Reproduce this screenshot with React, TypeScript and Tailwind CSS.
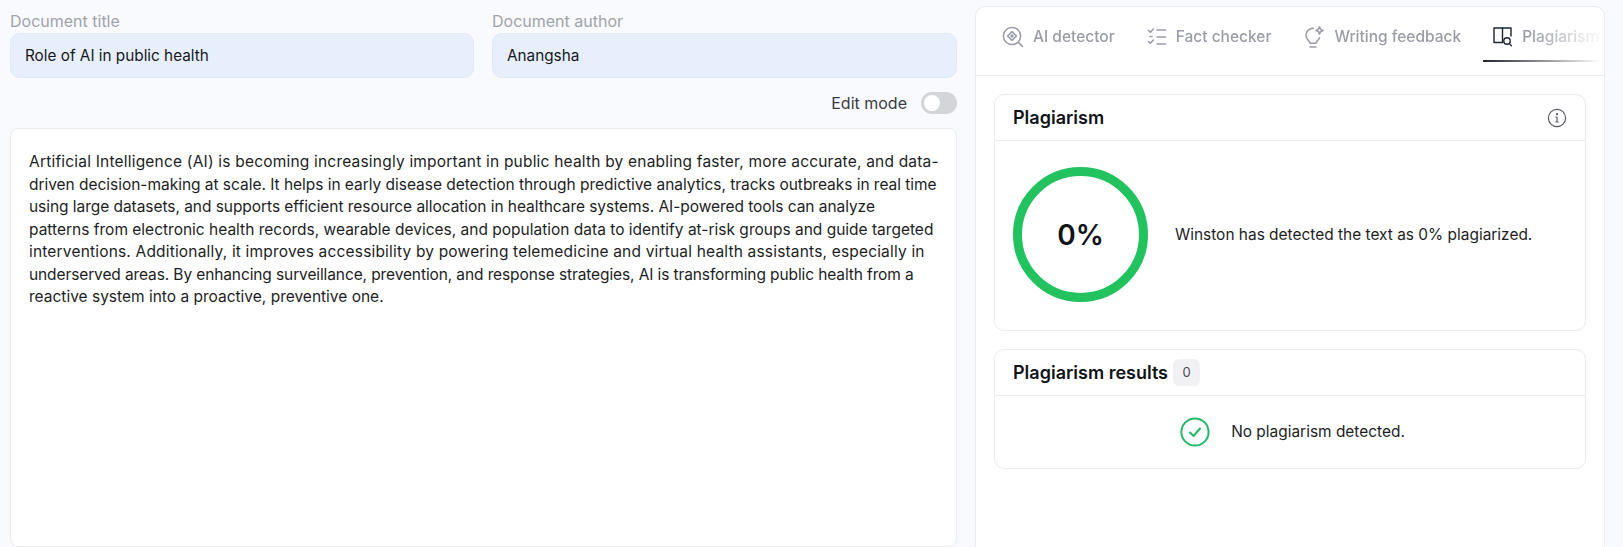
const FONT = "font-['Inter','Liberation_Sans',sans-serif]"

// tracking per line keeps each line's measured width
const LINES = [
    ['Artificial Intelligence (AI) is becoming increasingly important in public health by enabling faster, more accurate, and data-', 'tracking-[0.2px]'],
    ['driven decision-making at scale. It helps in early disease detection through predictive analytics, tracks outbreaks in real time', 'tracking-[-0.03px]'],
    ['using large datasets, and supports efficient resource allocation in healthcare systems. AI-powered tools can analyze', 'tracking-[-0.05px]'],
    ['patterns from electronic health records, wearable devices, and population data to identify at-risk groups and guide targeted', 'tracking-normal'],
    ['interventions. Additionally, it improves accessibility by powering telemedicine and virtual health assistants, especially in', 'tracking-[0.18px]'],
    ['underserved areas. By enhancing surveillance, prevention, and response strategies, AI is transforming public health from a', 'tracking-[-0.11px]'],
    ['reactive system into a proactive, preventive one.', 'tracking-normal'],
]

function DetectorIcon() {
    return (
        <svg width="22" height="24" viewBox="0 0 22 24" fill="none" stroke="currentColor" strokeWidth="1.5" strokeLinecap="round" strokeLinejoin="round">
            <circle cx="10" cy="11" r="8.6" />
            <path d="M10 6.6 14.4 11 10 15.4 5.6 11Z" />
            <circle cx="10" cy="11" r="1" />
            <path d="m16.4 17.4 4 4" />
        </svg>
    )
}

function ChecksIcon() {
    return (
        <svg width="20" height="20" viewBox="0 0 20 20" fill="none" stroke="currentColor" strokeWidth="1.6" strokeLinecap="round" strokeLinejoin="round">
            <path d="m1.5 3.5 1.8 1.8 3-3.3" />
            <path d="m1.5 14.5 1.8 1.8 3-3.3" />
            <path d="M10 3h8.5M10 10h8.5M10 17h8.5" />
            <path d="M3 9.5h2" />
        </svg>
    )
}

function BulbIcon() {
    return (
        <svg width="22" height="24" viewBox="0 0 22 24" fill="none" stroke="currentColor" strokeWidth="1.5" strokeLinecap="round" strokeLinejoin="round">
            <path d="M10.5 3.2A7.2 7.2 0 0 0 3 10.2c0 2.5 1.2 4.2 2.5 5.4.9.9 1.3 1.6 1.4 2.6h6.2c.1-1 .5-1.7 1.4-2.6.8-.7 1.5-1.6 2-2.8" />
            <path d="M7 22h6" />
            <path d="M16.5 1.8c.4 2.3 1.3 3.2 3.6 3.6-2.3.4-3.2 1.3-3.6 3.6-.4-2.3-1.3-3.2-3.6-3.6 2.3-.4 3.2-1.3 3.6-3.6Z" />
        </svg>
    )
}

function BookSearchIcon() {
    return (
        <svg width="20" height="22" viewBox="0 0 20 22" fill="none" stroke="#1f2430" strokeWidth="1.4" strokeLinecap="round" strokeLinejoin="round">
            <path d="M9.5 16.5H1V2h8.5v14.5Z" />
            <path d="M9.5 2H18v8" />
            <circle cx="14" cy="15" r="3.2" />
            <path d="m16.4 17.6 2 2.2" />
        </svg>
    )
}

function Tab({ icon, label }: { icon: React.ReactNode; label: string }) {
    return (
        <div className="flex items-center shrink-0 text-[#9a9ca6] gap-[9px]">
            {icon}
            <span className="text-[15.5px] font-medium whitespace-nowrap">{label}</span>
        </div>
    )
}

export default function App() {
    return (
        <div className={`${FONT} h-[547px] overflow-hidden bg-[#f8fafd] flex pl-[10px] pr-[18px] gap-[18px] text-[#16181d]`}>
            {/* Document column */}
            <div className="w-[947px] shrink-0 flex flex-col">
                <div className="grid grid-cols-[464px_465px] gap-[18px] pt-[9px]">
                    {[
                        ['Document title', 'Role of AI in public health'],
                        ['Document author', 'Anangsha'],
                    ].map(([label, value]) => (
                        <div key={label}>
                            <p className="text-[16px] leading-[24px] text-[#a0a2aa]">{label}</p>
                            <div className="h-[45px] flex items-center px-[14px] pt-[1px] rounded-[10px] bg-[#e8effc] border border-[#e1e8f6] text-[15.3px]">
                                {value}
                            </div>
                        </div>
                    ))}
                </div>

                <div className="flex items-center justify-end gap-[14px] h-[22px] mt-[14px]">
                    <span className="text-[16px] text-[#3a3c44]">Edit mode</span>
                    <div className="w-[36px] h-[22px] rounded-full bg-[#d4d5d9] p-[3px]">
                        <div className="w-[16px] h-[16px] rounded-full bg-white" />
                    </div>
                </div>

                <div className="mt-[14px] h-[460px] bg-white border border-[#e9ebf0] rounded-[8px] pt-[22px] pl-[18px]">
                    {LINES.map(([line, tracking]) => (
                        <p key={line} className={`text-[15.5px] leading-[22.5px] whitespace-nowrap text-[#1c1e24] ${tracking}`}>{line}</p>
                    ))}
                </div>
            </div>

            {/* Tool panel */}
            <div className="flex-1 mt-[6px] h-[560px] bg-white border border-[#e9ebf0] rounded-t-[10px] flex flex-col">
                <div className="h-[69px] shrink-0 border-b border-[#e9ebf0] relative overflow-hidden">
                    <div className="flex items-center h-[60px] pl-[26px] gap-[32px] [mask-image:linear-gradient(to_right,black_88%,transparent_100%)]">
                        <Tab icon={<DetectorIcon />} label="AI detector" />
                        <Tab icon={<ChecksIcon />} label="Fact checker" />
                        <Tab icon={<BulbIcon />} label="Writing feedback" />
                        <Tab icon={<BookSearchIcon />} label="Plagiarism" />
                    </div>
                    <div className="absolute left-[507px] top-[53px] w-[118px] h-[2px] bg-gradient-to-r from-[#1f2430] to-transparent" />
                </div>

                <div className="px-[18px] pt-[18px] flex flex-col gap-[18px]">
                    <section className="h-[237px] rounded-[10px] border border-[#e9ebf0] flex flex-col">
                        <div className="h-[46px] shrink-0 border-b border-[#e9ebf0] flex items-center justify-between px-[18px]">
                            <h2 className="text-[18px] font-semibold text-[#111318]">Plagiarism</h2>
                            <svg width="20" height="20" viewBox="0 0 20 20" fill="none" stroke="#5a5c64" strokeWidth="1.2" strokeLinecap="round">
                                <circle cx="10" cy="10" r="8.6" />
                                <path d="M10 9v5M8.8 9H10M8.8 14h2.4" />
                                <circle cx="10" cy="6.2" r=".5" fill="#5a5c64" />
                            </svg>
                        </div>
                        <div className="flex-1 flex items-center pl-[18px] gap-[27px] pb-[2px]">
                            <div className="w-[135px] h-[135px] shrink-0 rounded-full border-[9px] border-[#22c35e] flex items-center justify-center">
                                <span className="text-[28px] font-semibold text-[#111318]">0%</span>
                            </div>
                            <p className="text-[15.45px] text-[#1c1e24] whitespace-nowrap">Winston has detected the text as 0% plagiarized.</p>
                        </div>
                    </section>

                    <section className="h-[120px] rounded-[10px] border border-[#e9ebf0] flex flex-col">
                        <div className="h-[46px] shrink-0 border-b border-[#e9ebf0] flex items-center pl-[18px] gap-[5px]">
                            <h2 className="text-[18px] font-semibold text-[#111318]">Plagiarism results</h2>
                            <span className="w-[27px] h-[27px] rounded-[6px] bg-[#f1f1f4] flex items-center justify-center text-[13px] text-[#4a4c54]">0</span>
                        </div>
                        <div className="flex-1 flex items-center justify-center gap-[21px] pl-[5px]">
                            <svg width="30" height="30" viewBox="0 0 30 30" fill="none" stroke="#22b866" strokeWidth="2" strokeLinecap="round" strokeLinejoin="round">
                                <circle cx="15" cy="15" r="13.6" />
                                <path d="m10 15.5 3.5 3.5 6.5-7.5" />
                            </svg>
                            <p className="text-[15.45px] text-[#1c1e24]">No plagiarism detected.</p>
                        </div>
                    </section>
                </div>
            </div>
        </div>
    )
}
